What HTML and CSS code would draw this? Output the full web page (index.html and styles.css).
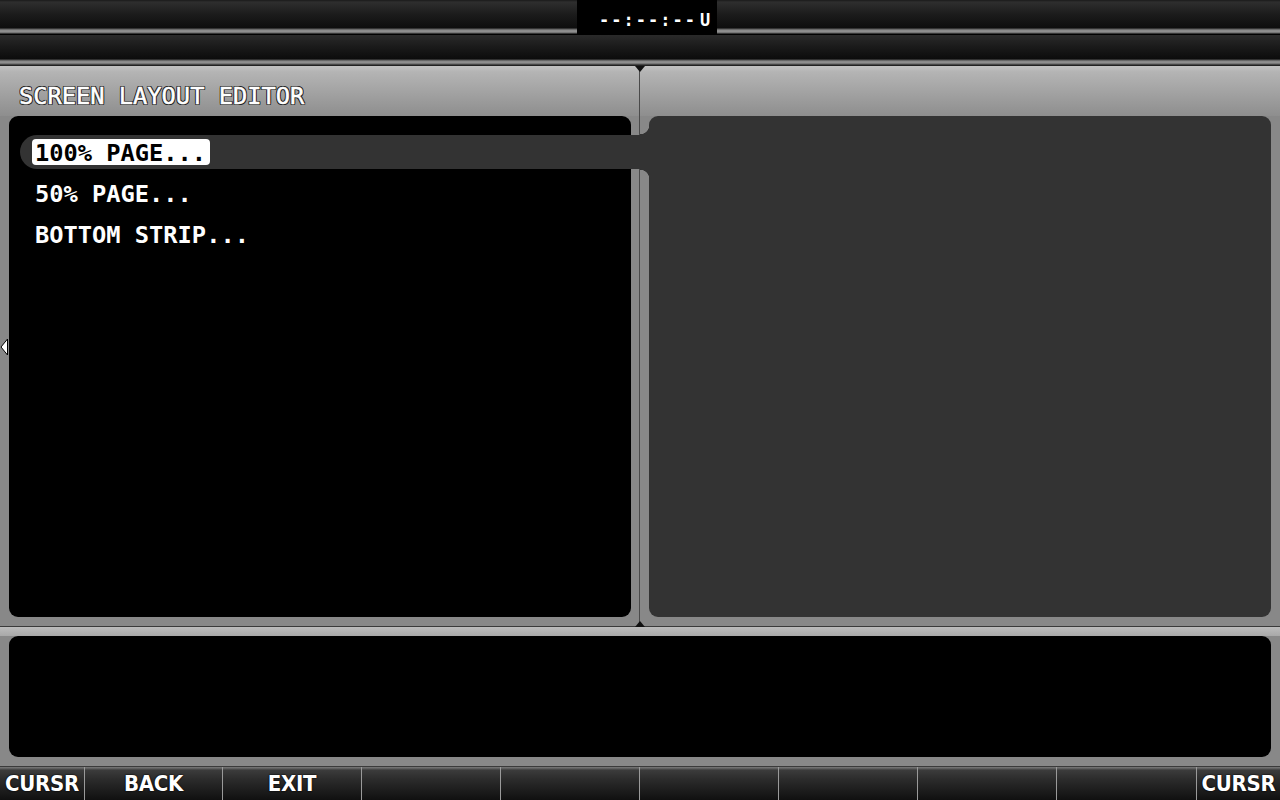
FILE: index.html
```html
<!DOCTYPE html>
<html>
<head>
  <title>Screen Layout Editor</title>
  <link rel="stylesheet" href="styles.css">
</head>
<body>

  <div class="topbar">
    <div class="clock">--:--:--<span class="clock-u">U</span></div>
  </div>
  <div class="subbar"></div>

  <div class="main">
    <div class="panel panel-left">
      <div class="panel-title">SCREEN LAYOUT EDITOR</div>
      <div class="panel-box menu">
        <div class="menu-row selected"><span class="menu-label">100% PAGE...</span></div>
        <div class="menu-row"><span class="menu-label">50% PAGE...</span></div>
        <div class="menu-row"><span class="menu-label">BOTTOM STRIP...</span></div>
      </div>
    </div>
    <div class="panel panel-right">
      <div class="panel-title"></div>
      <div class="panel-box preview"></div>
    </div>
  </div>

  <div class="bottom">
    <div class="bottom-box"></div>
  </div>

  <div class="softkeys">
    <div class="key key-end">CURSR</div>
    <div class="key key-1">BACK</div>
    <div class="key">EXIT</div>
    <div class="key"></div>
    <div class="key"></div>
    <div class="key"></div>
    <div class="key"></div>
    <div class="key"></div>
    <div class="key key-9"></div>
    <div class="key key-end">CURSR</div>
  </div>

  <!-- pane scroll marker on the left bezel -->
  <svg class="side-arrow" width="9" height="18" viewBox="0 0 9 18">
    <polygon points="7.5,1 1,9 7.5,17" fill="#fff" stroke="#000" stroke-width="1"/>
  </svg>

</body>
</html>
```

FILE: styles.css
```css
body {
  margin: 0;
  width: 1280px;
  height: 800px;
  overflow: hidden;
  background: #000;
  font-family: "DejaVu Sans Mono", monospace;
  color: #fff;
}

/* title bars */
.topbar {
  height: 35px;
  display: flex;
  justify-content: center;
  background: linear-gradient(to bottom, #1a1a1a 0, #2e2e2e 2px, #1c1c1c 14px, #0e0e0e 28px, #5a5a5a 29px, #9a9a9a 31px, #6a6a6a 33px, #000 34px);
}

.subbar {
  height: 31px;
  background: linear-gradient(to bottom, #2a2a2a 0, #1a1a1a 12px, #0c0c0c 24px, #555 25px, #9a9a9a 27px, #6a6a6a 29px, #222 30px);
}

.clock {
  width: 140px;
  height: 34px;
  margin-left: 14px;
  box-sizing: border-box;
  padding-left: 22px;
  background: #000;
  font-size: 17px;
  font-weight: bold;
  letter-spacing: 2px;
  line-height: 40px;
}

.clock-u {
  margin-left: 3px;
  letter-spacing: 0;
}

/* two upper panels */
.main {
  display: grid;
  grid-template-columns: 640px 640px;
  height: 561px;
  position: relative;
}

.main::before,
.main::after {
  content: "";
  position: absolute;
  left: 635px;
  border-left: 5px solid transparent;
  border-right: 5px solid transparent;
  z-index: 3;
}

.main::before {
  top: 0;
  border-top: 6px solid #111;
}

.main::after {
  bottom: 0;
  border-bottom: 6px solid #111;
}

.panel {
  display: flex;
  flex-direction: column;
  box-sizing: border-box;
  padding: 0 8px 9px 9px;
  border-bottom: 1px solid #3a3a3a;
  background: linear-gradient(to bottom, #c2c2c2 0, #b4b4b4 6px, #9a9a9a 36px, #8e8e8e 50px, #888 50px);
}

.panel-left {
  border-right: 1px solid #4a4a4a;
}

.panel-right {
  padding-left: 9px;
  padding-right: 9px;
}

.panel-title {
  height: 50px;
  box-sizing: border-box;
  padding: 10px 0 0 10px;
  font-size: 23.7px;
  line-height: 40px;
  color: #fff;
  -webkit-text-stroke: 0.5px #fff;
  text-shadow: 1px 0 0 #262626, -1px 0 0 #262626, 0 1px 0 #262626, 0 -1px 0 #262626,
    1px 1px 0 #262626, -1px -1px 0 #262626, 1px -1px 0 #262626, -1px 1px 0 #262626;
}

.panel-box {
  flex: 1;
  border-radius: 9px;
}

.menu {
  background: #000;
  padding-top: 19px;
  display: flex;
  flex-direction: column;
  gap: 7px;
}

.preview {
  background: #333;
}

.menu-row {
  height: 34px;
  display: flex;
  align-items: center;
  margin-left: 11px;
  padding-left: 12px;
  font-size: 23.7px;
  font-weight: bold;
}

.menu-label {
  padding: 0 4px 0 3px;
  height: 26px;
  line-height: 28px;
  border-radius: 4px;
}

/* highlighted row reaches across into the preview pane */
.menu-row.selected {
  position: relative;
  z-index: 2;
  margin-right: -18px;
  background: #333;
  border-radius: 17px 0 0 17px;
}

.menu-row.selected::before,
.menu-row.selected::after {
  content: "";
  position: absolute;
  right: 0;
  width: 9px;
  height: 10px;
}

.menu-row.selected::before {
  bottom: 100%;
  background: radial-gradient(circle 9.5px at 0 0, transparent 9px, #333 9.5px);
}

.menu-row.selected::after {
  top: 100%;
  background: radial-gradient(circle 9.5px at 0 100%, transparent 9px, #333 9.5px);
}

.menu-row.selected .menu-label {
  background: #fff;
  color: #000;
}

/* message strip */
.bottom {
  height: 140px;
  box-sizing: border-box;
  padding: 9px;
  border-bottom: 1px solid #3a3a3a;
  background: linear-gradient(to bottom, #bcbcbc 0, #a8a8a8 9px, #888 9px);
}

.bottom-box {
  height: 121px;
  background: #000;
  border-radius: 9px;
}

/* soft keys */
.softkeys {
  display: flex;
  height: 33px;
}

.key {
  width: 139px;
  box-sizing: border-box;
  border-left: 1px solid #9a9a9a;
  background: linear-gradient(to bottom, #7a7a7a 0, #555 2px, #3c3c3c 3px, #2c2c2c 12px, #101010 100%);
  text-align: center;
  font-family: "DejaVu Sans Condensed", "DejaVu Sans", sans-serif;
  font-weight: bold;
  font-size: 22px;
  letter-spacing: -0.3px;
  line-height: 34px;
  text-shadow: 0 0 2px #000, 0 0 1px #000;
}

.key-end {
  width: 84px;
}

.softkeys .key:first-child {
  border-left: none;
}

.key-1 {
  width: 138px;
}

.key-9 {
  width: 140px;
}

.side-arrow {
  position: absolute;
  left: 0;
  top: 338px;
}
```
